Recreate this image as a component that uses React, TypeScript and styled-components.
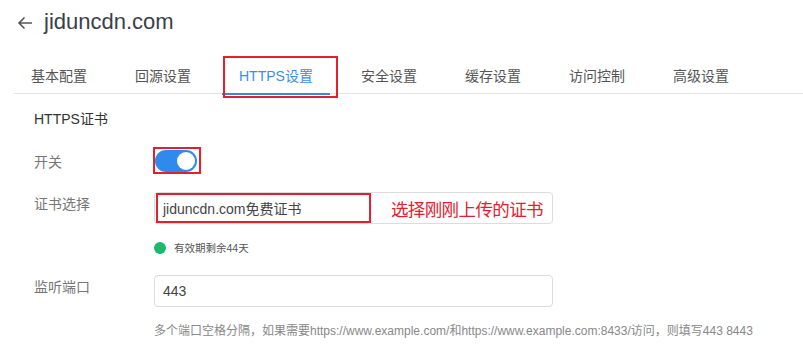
import React from 'react'
import styled, { createGlobalStyle } from 'styled-components'

const GlobalStyle = createGlobalStyle`
  body {
    margin: 0;
    background: #fff;
    font-family: "Liberation Sans", "Noto Sans CJK SC", sans-serif;
    color: #333;
  }
`

const tabs = ['基本配置', '回源设置', 'HTTPS设置', '安全设置', '缓存设置', '访问控制', '高级设置']

const App: React.FC = () => {
  return (
    <>
      <GlobalStyle />
      <Page>
        <Header>
          <BackIcon width="16" height="16" viewBox="0 0 16 16">
            <path d="M15 8H2M7.5 2.5L2 8l5.5 5.5" fill="none" stroke="#555" strokeWidth="1.6" />
          </BackIcon>
          <Title>jiduncdn.com</Title>
        </Header>

        <TabBar>
          {tabs.map((t, i) => (
            <Tab key={t} active={i === 2}>
              {t}
              {i === 2 && <Mark style={{ left: 1, right: -8, top: -2, bottom: -5 }} />}
            </Tab>
          ))}
        </TabBar>

        <Content>
          <SectionTitle>HTTPS证书</SectionTitle>

          <Row center>
            <Label>开关</Label>
            <Toggle>
              <Knob />
              <Mark style={{ left: -2, right: -4, top: -3, bottom: -2 }} />
            </Toggle>
          </Row>

          <Row>
            <Label>证书选择</Label>
            <Select>
              <Value>jiduncdn.com免费证书</Value>
              <Note>选择刚刚上传的证书</Note>
              <Mark style={{ left: 1, top: 0, bottom: 0, width: 211 }} />
            </Select>
          </Row>

          <Status>
            <Dot />
            有效期剩余44天
          </Status>

          <Row>
            <Label>监听端口</Label>
            <Input>443</Input>
          </Row>
          <Hint>
            多个端口空格分隔，如果需要https://www.example.com/和https://www.example.com:8433/访问，则填写443 8443
          </Hint>
        </Content>
      </Page>
    </>
  )
}

const Page = styled.div`
  padding-left: 14px;
  width: 789px;
  height: 350px;
  overflow: hidden;
`

const Header = styled.div`
  display: flex;
  align-items: center;
  gap: 11px;
  height: 44px;
  padding-left: 3px;
`

const BackIcon = styled.svg`
  display: block;
  margin-top: 1px;
`

const Title = styled.div`
  font-size: 22px;
  color: #3a3f4a;
  line-height: 28px;
`

const TabBar = styled.div`
  display: flex;
  gap: 14px;
  margin-top: 14px;
  height: 35px;
  border-bottom: 1px solid #e2e2e2;
`

const Tab = styled.div<{ active?: boolean }>`
  position: relative;
  box-sizing: border-box;
  height: 37px;
  padding: 0 17px 2px;
  display: flex;
  align-items: center;
  font-size: 14px;
  color: ${(p) => (p.active ? '#3b8ded' : '#555')};
  border-bottom: 2px solid ${(p) => (p.active ? '#2f8aee' : 'transparent')};
`

const Mark = styled.span`
  position: absolute;
  border: 2px solid #e5202e;
  pointer-events: none;
`

const Content = styled.div`
  padding-left: 20px;
`

const SectionTitle = styled.div`
  margin-top: 15px;
  font-size: 14px;
  line-height: 20px;
  color: #333;
`

const Row = styled.div<{ center?: boolean }>`
  display: flex;
  align-items: ${(p) => (p.center ? 'center' : 'flex-start')};
  margin-top: ${(p) => (p.center ? '21px' : '20px')};
`

const Label = styled.div`
  width: 120px;
  flex-shrink: 0;
  font-size: 14px;
  line-height: 20px;
  padding-top: 2px;
  color: #777;
`

const Toggle = styled.div`
  position: relative;
  box-sizing: border-box;
  width: 42px;
  height: 22px;
  margin-left: 1px;
  border-radius: 11px;
  background: #2f8aee;
  display: flex;
  align-items: center;
  justify-content: flex-end;
  padding-right: 2px;
`

const Knob = styled.span`
  width: 18px;
  height: 18px;
  border-radius: 50%;
  background: #fff;
`

const Select = styled.div`
  position: relative;
  box-sizing: border-box;
  width: 399px;
  height: 32px;
  border: 1px solid #dcdcdc;
  border-radius: 4px;
  display: flex;
  align-items: center;
  justify-content: space-between;
  padding: 0 9px 0 8px;
`

const Value = styled.span`
  font-size: 14px;
  color: #444;
`

const Note = styled.span`
  font-size: 17.5px;
  letter-spacing: -0.6px;
  color: #e5202e;
`

const Status = styled.div`
  display: flex;
  align-items: center;
  gap: 8px;
  margin: 16px 0 0 120px;
  font-size: 10.5px;
  color: #555;
`

const Dot = styled.span`
  width: 12px;
  height: 12px;
  border-radius: 50%;
  background: #1bb96b;
`

const Input = styled.div`
  box-sizing: border-box;
  width: 399px;
  height: 32px;
  border: 1px solid #dcdcdc;
  border-radius: 4px;
  display: flex;
  align-items: center;
  padding-left: 8px;
  font-size: 14px;
  color: #444;
`

const Hint = styled.div`
  margin: 14px 0 0 120px;
  font-size: 12px;
  color: #888;
  white-space: nowrap;
`

export default App
